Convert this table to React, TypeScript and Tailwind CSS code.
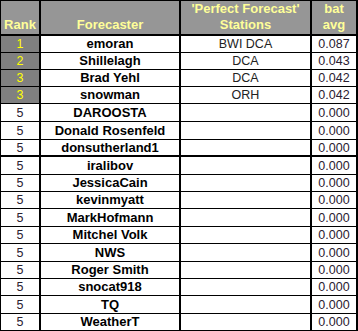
import React from "react";

type Row = { rank: string; name: string; st: string; avg: string; h: string; top?: boolean; thick?: boolean };

const rows: Row[] = [
  { rank: "1", name: "emoran", st: "BWI DCA", avg: "0.087", h: "h-[17px]", top: true },
  { rank: "2", name: "Shillelagh", st: "DCA", avg: "0.043", h: "h-[17px]", top: true },
  { rank: "3", name: "Brad Yehl", st: "DCA", avg: "0.042", h: "h-[17px]", top: true },
  { rank: "3", name: "snowman", st: "ORH", avg: "0.042", h: "h-[17px]", top: true },
  { rank: "5", name: "DAROOSTA", st: "", avg: "0.000", h: "h-[18px]" },
  { rank: "5", name: "Donald Rosenfeld", st: "", avg: "0.000", h: "h-[18px]" },
  { rank: "5", name: "donsutherland1", st: "", avg: "0.000", h: "h-[17px]", thick: true },
  { rank: "5", name: "iralibov", st: "", avg: "0.000", h: "h-[18px]" },
  { rank: "5", name: "JessicaCain", st: "", avg: "0.000", h: "h-[17px]" },
  { rank: "5", name: "kevinmyatt", st: "", avg: "0.000", h: "h-[17px]" },
  { rank: "5", name: "MarkHofmann", st: "", avg: "0.000", h: "h-[18px]" },
  { rank: "5", name: "Mitchel Volk", st: "", avg: "0.000", h: "h-[17px]" },
  { rank: "5", name: "NWS", st: "", avg: "0.000", h: "h-[18px]" },
  { rank: "5", name: "Roger Smith", st: "", avg: "0.000", h: "h-[17px]" },
  { rank: "5", name: "snocat918", st: "", avg: "0.000", h: "h-[17px]" },
  { rank: "5", name: "TQ", st: "", avg: "0.000", h: "h-[18px]" },
  { rank: "5", name: "WeatherT", st: "", avg: "0.000", h: "h-[17px]" },
];

export default function App() {
  return (
    <div
      className="w-[358px] h-[331px] bg-white overflow-hidden"
      style={{ fontFamily: '"Liberation Sans", Arial, sans-serif' }}
    >
      <div className="border-l border-t border-black w-[358px]">
        {/* header */}
        <div className="flex h-[35px] border-b-2 border-black bg-[#969696] text-[#ffff99] font-bold text-[13px] leading-[16px]">
          <div className="w-[40px] border-r-2 border-black flex items-end justify-center pb-[1px]">Rank</div>
          <div className="w-[140px] border-r-2 border-black flex items-end justify-center pb-[1px]">Forecaster</div>
          <div className="w-[131px] border-r-2 border-black flex flex-col items-center justify-end pb-[1px] text-center">
            <span>'Perfect Forecast'</span>
            <span>Stations</span>
          </div>
          <div className="w-[46px] border-r-2 border-black flex flex-col items-center justify-end pb-[1px] text-center">
            <span>bat</span>
            <span>avg</span>
          </div>
        </div>
        {rows.map((r, i) => (
          <div
            key={i}
            className={`flex ${r.h} ${r.thick ? "border-b-2" : "border-b"} border-black text-[13px] leading-[16px]`}
          >
            <div
              className={`w-[40px] border-r-2 border-black flex items-center justify-center text-[12.5px] ${
                r.top ? "bg-[#808080] text-[#ffff00]" : "text-[#2a2030]"
              }`}
            >
              {r.rank}
            </div>
            <div className="w-[140px] border-r-2 border-black flex items-center justify-center font-bold text-black">
              {r.name}
            </div>
            <div className="w-[131px] border-r-2 border-black flex items-center justify-center text-[12.5px] text-[#222]">
              {r.st}
            </div>
            <div className="w-[46px] border-r-2 border-black flex items-center justify-center text-[12.5px] text-[#2a2030]">
              {r.avg}
            </div>
          </div>
        ))}
      </div>
    </div>
  );
}
